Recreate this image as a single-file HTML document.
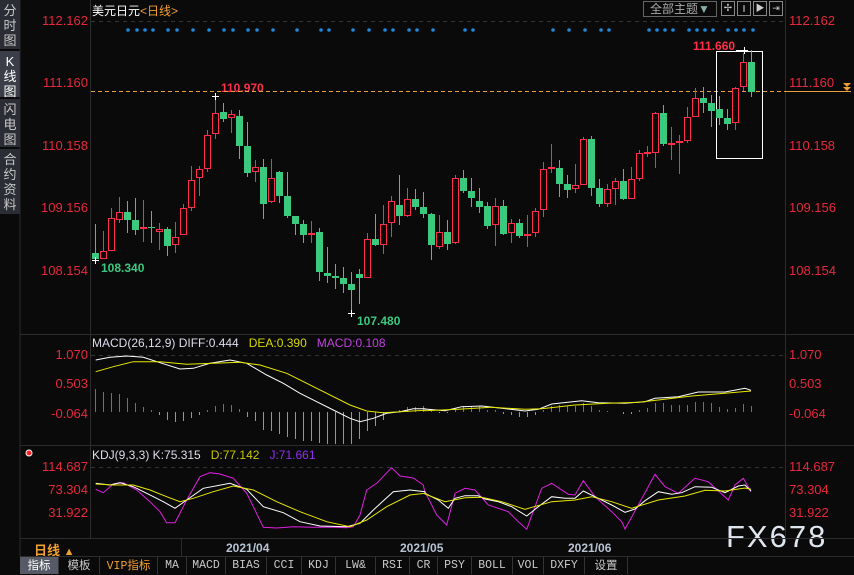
<!DOCTYPE html>
<html><head><meta charset="utf-8">
<style>
*{margin:0;padding:0;box-sizing:border-box}
body{width:854px;height:574px;background:#0a0a0a;overflow:hidden;position:relative;font-family:"Liberation Sans","Noto Sans CJK SC",sans-serif}
.sb{position:absolute;left:0;width:20px;background:#2b2d34;color:#c8c8c8;font-size:13px;line-height:15px;text-align:center;padding-top:3px}
.lab{position:absolute;font-size:13px;color:#e8283c}
.l{right:766px;text-align:right}
.r{left:789px}
.btn{position:absolute;top:557px;height:17px;font-size:11.5px;color:#c8c8c8;line-height:17px;text-align:center;border-right:1px solid #333;font-family:"Liberation Mono","Noto Sans CJK SC",monospace}
</style></head><body>
<div class="sb" style="top:0;height:49px">分<br>时<br>图</div>
<div class="sb" style="top:51px;height:46px;background:#3b3e48;color:#fff">K<br>线<br>图</div>
<div class="sb" style="top:99px;height:48px">闪<br>电<br>图</div>
<div class="sb" style="top:149px;height:65px">合<br>约<br>资<br>料</div>

<div style="position:absolute;left:92px;top:2px;font-size:12px;color:#fff">美元日元<span style="color:#f0a030">&lt;日线&gt;</span></div>

<div style="position:absolute;left:643px;top:1px;width:74px;height:16px;border:1px solid #666;color:#aaa;font-size:12px;line-height:14px;padding-left:6px">全部主题<span style="color:#8aa">▼</span></div>
<div style="position:absolute;left:721px;top:1px;width:14px;height:15px;border:1px solid #888;color:#ccc;font-size:10px;text-align:center;line-height:13px">✢</div>
<div style="position:absolute;left:737px;top:1px;width:14px;height:15px;border:1px solid #888;color:#ccc;font-size:9px;text-align:center;line-height:13px">⫾</div>
<div style="position:absolute;left:753px;top:1px;width:14px;height:15px;border:1px solid #888;color:#ccc;font-size:9px;text-align:center;line-height:13px">▶</div>
<div style="position:absolute;left:769px;top:1px;width:14px;height:15px;border:1px solid #888;color:#ccc;font-size:9px;text-align:center;line-height:13px">⇥</div>

<div class="lab l" style="top:13px">112.162</div>
<div class="lab l" style="top:75px">111.160</div>
<div class="lab l" style="top:138px">110.158</div>
<div class="lab l" style="top:200px">109.156</div>
<div class="lab l" style="top:263px">108.154</div>
<div class="lab r" style="top:13px">112.162</div>
<div class="lab r" style="top:75px">111.160</div>
<div class="lab r" style="top:138px">110.158</div>
<div class="lab r" style="top:200px">109.156</div>
<div class="lab r" style="top:263px">108.154</div>

<div class="lab l" style="top:347px">1.070</div>
<div class="lab l" style="top:376px">0.503</div>
<div class="lab l" style="top:406px">-0.064</div>
<div class="lab r" style="top:347px">1.070</div>
<div class="lab r" style="top:376px">0.503</div>
<div class="lab r" style="top:406px">-0.064</div>

<div class="lab l" style="top:459px">114.687</div>
<div class="lab l" style="top:482px">73.304</div>
<div class="lab l" style="top:505px">31.922</div>
<div class="lab r" style="top:459px">114.687</div>
<div class="lab r" style="top:482px">73.304</div>
<div class="lab r" style="top:505px">31.922</div>

<div style="position:absolute;left:92px;top:336px;font-size:12px;color:#dde"><span>MACD(26,12,9) DIFF:0.444</span>&nbsp;&nbsp; <span style="color:#d8d800">DEA:0.390</span>&nbsp;&nbsp; <span style="color:#c040e0">MACD:0.108</span></div>
<div style="position:absolute;left:92px;top:448px;font-size:12px;color:#dde"><span>KDJ(9,3,3) K:75.315</span>&nbsp;&nbsp; <span style="color:#c8c800">D:77.142</span>&nbsp;&nbsp; <span style="color:#9030f0">J:71.661</span></div>

<div style="position:absolute;left:221px;top:81px;font-size:12px;font-weight:bold;color:#ff3048">110.970</div>
<div style="position:absolute;left:693px;top:39px;font-size:12px;font-weight:bold;color:#ff3048">111.660</div>
<div style="position:absolute;left:101px;top:261px;font-size:12px;font-weight:bold;color:#3cc87f">108.340</div>
<div style="position:absolute;left:357px;top:314px;font-size:12px;font-weight:bold;color:#3cc87f">107.480</div>

<div style="position:absolute;left:34px;top:540px;font-size:13px;font-weight:bold;color:#f0a030">日线 <span style="font-size:11px">▲</span></div>
<div style="position:absolute;left:226px;top:541px;font-size:12px;font-weight:bold;color:#b8c4d4">2021/04</div>
<div style="position:absolute;left:400px;top:541px;font-size:12px;font-weight:bold;color:#b8c4d4">2021/05</div>
<div style="position:absolute;left:568px;top:541px;font-size:12px;font-weight:bold;color:#b8c4d4">2021/06</div>
<div style="position:absolute;left:726px;top:519px;font-size:31px;color:#dfe6f0;letter-spacing:2px">FX678</div>

<div class="btn" style="left:20px;width:39px;background:#555a66;color:#fff;font-family:'Noto Sans CJK SC',sans-serif">指标</div>
<div class="btn" style="left:59px;width:41px;font-family:'Noto Sans CJK SC',sans-serif">模板</div>
<div class="btn" style="left:100px;width:58px;color:#f0a030">VIP<span style="font-family:'Noto Sans CJK SC',sans-serif">指标</span></div>
<div class="btn" style="left:158px;width:29px">MA</div>
<div class="btn" style="left:187px;width:39px">MACD</div>
<div class="btn" style="left:226px;width:41px">BIAS</div>
<div class="btn" style="left:267px;width:35px">CCI</div>
<div class="btn" style="left:302px;width:34px">KDJ</div>
<div class="btn" style="left:336px;width:40px">LW&amp;</div>
<div class="btn" style="left:376px;width:34px">RSI</div>
<div class="btn" style="left:410px;width:28px">CR</div>
<div class="btn" style="left:438px;width:34px">PSY</div>
<div class="btn" style="left:472px;width:41px">BOLL</div>
<div class="btn" style="left:513px;width:31px">VOL</div>
<div class="btn" style="left:544px;width:41px">DXFY</div>
<div class="btn" style="left:585px;width:43px;font-family:'Noto Sans CJK SC',sans-serif">设置</div>

<svg id="s" width="854" height="574" style="position:absolute;left:0;top:0" xmlns="http://www.w3.org/2000/svg">
<g stroke="#2c2c2c" stroke-width="1">
<line x1="20" y1="0.5" x2="20" y2="557"/>
<line x1="90.5" y1="0" x2="90.5" y2="538"/>
<line x1="785.5" y1="0" x2="785.5" y2="538"/>
<line x1="20" y1="334.5" x2="854" y2="334.5"/>
<line x1="20" y1="445.5" x2="854" y2="445.5"/>
<line x1="20" y1="538.5" x2="854" y2="538.5"/>
<line x1="20" y1="556.5" x2="854" y2="556.5"/>
<line x1="181.5" y1="538" x2="181.5" y2="557"/>
</g>
<g stroke="#333" stroke-dasharray="4,4">
<line x1="91" y1="21.5" x2="785" y2="21.5"/>
<line x1="91" y1="355.5" x2="785" y2="355.5"/>
<line x1="91" y1="467.5" x2="785" y2="467.5"/>
</g>
<line x1="91" y1="91.5" x2="785" y2="91.5" stroke="#e8a040" stroke-dasharray="4,3"/>
<line x1="785" y1="91.5" x2="851" y2="91.5" stroke="#e8a040"/>
<path d="M843 83h8l-4 4zM843 87h8l-4 4z" fill="#f0a030"/>
<circle cx="29" cy="453" r="3" fill="#ff2020" stroke="#fff" stroke-width="1"/>
<rect x="716.5" y="51.5" width="46" height="107" fill="none" stroke="#fff" stroke-width="1"/>
<g id="c"></g>
</svg>
<script>
var g=document.getElementById('c'),h='';
var C=[[253,259,224,260,'g'],[251,259,231,259,'r'],[218,251,208,251,'r'],[212,220,197,223,'r'],[212,220,201,233,'g'],[220,230,198,235,'g'],[227,229,200,242,'r'],[227,228,211,243,'g'],[229,232,223,250,'r'],[229,246,227,256,'g'],[237,245,222,253,'r'],[208,235,204,235,'r'],[180,208,166,211,'r'],[169,178,166,196,'r'],[135,169,130,172,'r'],[113,134,95,139,'r'],[112,119,103,122,'g'],[114,118,110,133,'r'],[116,146,110,159,'g'],[146,173,122,177,'g'],[167,172,160,182,'r'],[167,204,159,219,'g'],[178,202,159,203,'r'],[172,196,171,203,'g'],[196,216,172,218,'g'],[216,224,216,235,'g'],[224,235,220,243,'g'],[233,235,221,243,'r'],[232,272,228,281,'g'],[273,276,247,283,'g'],[276,278,264,289,'g'],[278,284,267,293,'g'],[284,290,272,313,'g'],[274,278,269,304,'g'],[239,278,233,278,'r'],[239,245,214,246,'g'],[224,245,205,254,'r'],[201,223,196,237,'r'],[205,216,175,225,'g'],[199,216,188,217,'r'],[199,207,189,210,'g'],[207,214,192,218,'g'],[214,245,213,260,'g'],[232,247,215,249,'r'],[232,244,220,250,'g'],[178,243,175,244,'r'],[178,191,170,193,'g'],[191,198,178,207,'g'],[201,207,188,213,'g'],[206,226,202,229,'g'],[206,225,198,246,'r'],[206,234,200,235,'g'],[223,233,219,243,'r'],[223,236,219,238,'g'],[234,235,215,247,'r'],[211,233,208,237,'r'],[169,210,162,217,'r'],[167,168,144,173,'r'],[168,184,160,197,'g'],[184,190,175,198,'g'],[185,189,164,193,'r'],[139,185,137,185,'r'],[139,188,136,196,'g'],[188,204,179,207,'g'],[189,204,184,207,'r'],[181,189,178,205,'r'],[181,199,169,200,'g'],[179,199,167,199,'r'],[153,179,150,181,'r'],[152,154,146,157,'r'],[113,153,112,168,'r'],[113,144,105,146,'g'],[143,145,127,160,'r'],[141,142,135,174,'r'],[117,141,107,143,'r'],[98,117,88,117,'r'],[98,103,87,113,'g'],[103,111,95,127,'g'],[109,118,96,125,'g'],[118,124,109,130,'g'],[88,123,87,130,'r'],[62,87,53,91,'r'],[62,92,50,97,'g']];
var R='#ff2e4d',G='#3bc97f';
C.forEach(function(c,i){var x=95+8*i,col=c[4]=='r'?R:G;
h+='<line x1="'+(x+.5)+'" y1="'+c[2]+'" x2="'+(x+.5)+'" y2="'+c[3]+'" stroke="'+col+'"/>';
var hh=Math.max(c[1]-c[0],1);
if(c[4]=='r')h+='<rect x="'+(x-2.5)+'" y="'+(c[0]+.5)+'" width="6" height="'+Math.max(hh-1,1)+'" fill="#0a0a0a" stroke="'+R+'" stroke-width="1"/>';
else h+='<rect x="'+(x-3)+'" y="'+c[0]+'" width="7" height="'+hh+'" fill="'+G+'"/>';});
[[95,260],[215,96],[351,313],[744,50]].forEach(function(p){h+='<path d="M'+(p[0]-3)+' '+(p[1]+.5)+'h7M'+(p[0]+.5)+' '+(p[1]-3)+'v7" stroke="#fff"/>';});
h+='<line x1="736" y1="50.5" x2="748" y2="50.5" stroke="#fff"/>';
// dots
var D=[128,137,145,153,168,177,193,209,224,233,248,257,273,297,321,329,353,369,385,393,409,417,433,465,473,553,569,585,601,609,649,657,665,673,689,697,705,713,728,736,744,753];
D.forEach(function(x){h+='<circle cx="'+x+'" cy="30" r="1.8" fill="#1e88d8"/>';});
// MACD hist
var M=[23,20,19,18,14,9,5,2,-3,-8,-10,-9,-6,-3,2,6,8,7,3,-5,-9,-18,-19,-22,-25,-27,-29,-29,-31,-32,-32,-32,-32,-27,-19,-14,-8,-1,2,5,5,6,1,-1,-1,4,6,6,6,2,2,-2,-3,-5,-5,-3,2,6,7,6,6,9,6,2,1,0,-2,-2,2,4,9,9,7,7,7,10,10,9,5,3,4,8,6];
M.forEach(function(v,i){var x=95+8*i+.5;h+='<line x1="'+x+'" y1="412" x2="'+x+'" y2="'+(412-v)+'" stroke="'+(v>=0?'#ff3048':'#3bc97f')+'"/>';});
function pl(a,ox,col){var s=a.map(function(p){return (ox+p[0]/3).toFixed(1)+','+(330+p[1]/3).toFixed(1)}).join(' ');return s;}
function line(a,b,col){h+='<polyline fill="none" stroke="'+col+'" stroke-width="1" points="'+pl(a,0)+' '+pl(b,425)+'"/>';}
line([[287,90],[330,82],[380,78],[430,82],[480,98],[540,117],[580,115],[630,100],[690,90],[740,100],[800,135],[850,160],[900,190],[950,215],[1000,240],[1050,265],[1080,275],[1120,265],[1160,250],[1200,245],[1240,236],[1275,236]],[[0,237],[60,242],[110,230],[170,228],[250,237],[300,243],[340,238],[380,222],[470,212],[520,218],[600,220],[660,215],[690,205],[760,200],[820,186],[900,186],[960,175],[978,181]],'#fff');
line([[287,125],[340,110],[400,95],[480,95],[560,103],[640,100],[720,97],[780,105],[860,130],[950,175],[1050,225],[1100,243],[1150,248],[1275,241]],[[0,242],[100,238],[200,232],[300,238],[350,236],[450,225],[550,220],[640,217],[700,210],[800,198],[900,190],[978,183]],'#e8e800');
line([[287,478],[310,488],[340,462],[370,458],[410,480],[450,515],[480,545],[500,578],[525,578],[560,510],[600,440],[630,428],[660,432],[700,445],[740,490],[760,530],[790,592],[830,594],[880,590],[940,592],[1000,592],[1040,593],[1060,590],[1080,555],[1100,480],[1130,460],[1175,413],[1200,438],[1240,444],[1270,465],[1275,490]],[[0,485],[35,555],[65,585],[90,490],[120,475],[150,480],[190,525],[250,545],[280,575],[305,598],[350,475],[380,460],[430,493],[450,495],[475,452],[510,500],[560,545],[590,575],[600,597],[640,525],[690,433],[720,470],[760,490],[810,445],[850,455],[910,510],[930,465],[955,445],[978,485]],'#e020e0');
line([[287,460],[330,465],[360,458],[400,470],[440,490],[490,515],[525,535],[560,510],[610,475],[690,460],[740,478],[790,530],[850,548],[900,575],[960,588],[1040,590],[1080,580],[1120,540],[1180,485],[1230,480],[1275,485]],[[0,490],[40,510],[70,535],[90,505],[120,497],[160,497],[180,507],[220,515],[260,530],[305,558],[340,530],[380,500],[420,505],[450,505],[475,483],[510,500],[560,525],[600,547],[630,537],[660,512],[700,485],[740,493],[770,488],[810,470],[860,472],[900,488],[940,468],[960,465],[978,483]],'#fff');
line([[287,462],[340,465],[400,465],[450,480],[500,500],[540,515],[580,505],[640,485],[700,468],[760,480],[830,515],[900,545],[980,575],[1050,590],[1100,570],[1160,530],[1230,495],[1275,490]],[[0,492],[60,515],[120,503],[170,502],[230,515],[300,538],[380,515],[450,510],[500,500],[560,515],[620,535],[700,510],[780,498],[840,481],[900,483],[960,474],[978,478]],'#e8e800');
g.innerHTML=h;
</script>
</body></html>
